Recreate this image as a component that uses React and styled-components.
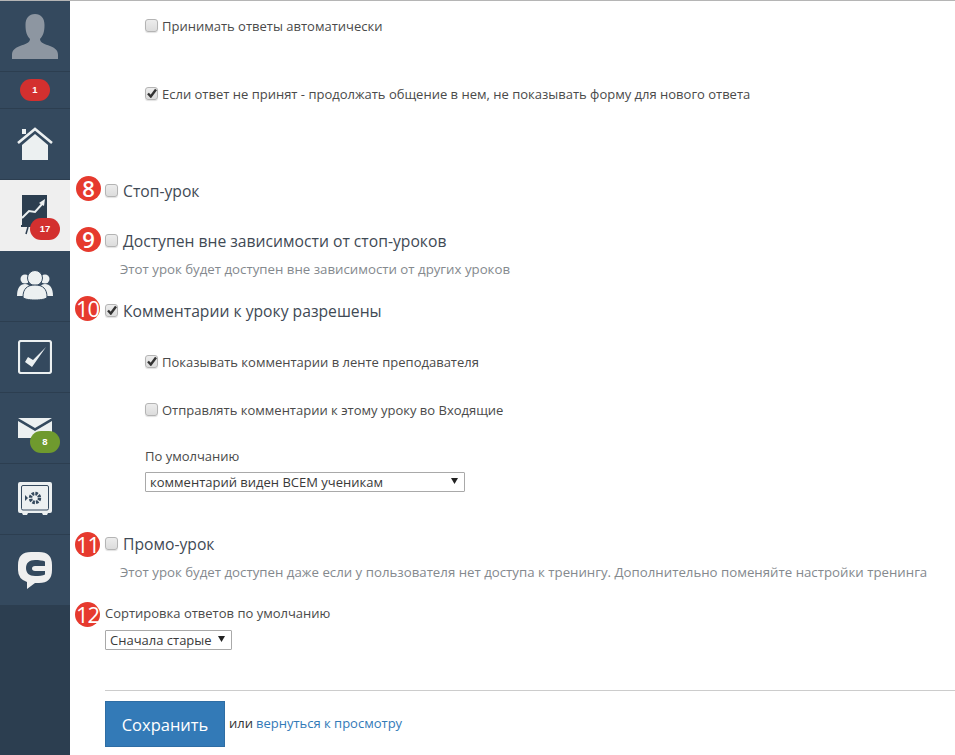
import React from 'react';
import styled, { createGlobalStyle } from 'styled-components';

const Global = createGlobalStyle`
  html, body {
    margin: 0;
    padding: 0;
    height: 755px;
    overflow: hidden;
    background: #fff;
  }
  body {
    font-family: "Open Sans", "Liberation Sans", sans-serif;
    font-size: 13px;
    color: #333;
  }
`;

const Page = styled.div`
  display: flex;
  height: 755px;
  border-top: 1px solid #b5b5b5;
  box-sizing: border-box;
`;

const Sidebar = styled.nav`
  width: 70px;
  flex: none;
  background: #2c3e50;
  display: flex;
  flex-direction: column;
`;

const NavItem = styled.div`
  position: relative;
  height: ${(p) => p.$h || 70}px;
  flex: none;
  display: flex;
  align-items: center;
  justify-content: center;
  background: ${(p) => (p.$active ? '#efefef' : '#34495e')};
  border-bottom: 1px solid ${(p) => (p.$active ? '#efefef' : '#2c3e50')};
`;

const Badge = styled.span`
  position: ${(p) => (p.$over ? 'absolute' : 'static')};
  left: 30px;
  top: 38px;
  width: 30px;
  height: 22px;
  border-radius: 11px;
  background: ${(p) => (p.$green ? '#6f9a2e' : '#d3302f')};
  color: #fff;
  font: bold 9.5px/22px "Liberation Sans", sans-serif;
  text-align: center;
`;

const Main = styled.main`
  flex: 1;
  min-width: 0;
  padding-left: 35px;
  display: flex;
  flex-direction: column;
`;

const Row = styled.label`
  position: relative;
  display: flex;
  align-items: center;
  height: 20px;
  margin-top: ${(p) => p.$top}px;
  margin-left: ${(p) => (p.$sub ? 40 : 0)}px;
  gap: ${(p) => (p.$big ? 5 : 4)}px;
  font-size: ${(p) => (p.$big ? 15.7 : 13)}px;
  color: ${(p) => (p.$big ? '#3f4a55' : '#4a4a4a')};
  white-space: nowrap;
`;

const Box = styled.span`
  box-sizing: border-box;
  width: 13px;
  height: 13px;
  flex: none;
  border: 1px solid #b4b4b4;
  border-radius: 3px;
  background: linear-gradient(#ececec, #dcdcdc);
  box-shadow: 0 1px 1px rgba(0, 0, 0, 0.12);
  display: flex;
  align-items: center;
  justify-content: center;
  position: relative;
  top: -1px;
`;

const Marker = styled.span`
  position: absolute;
  left: ${(p) => p.$x || -29}px;
  top: ${(p) => p.$y}px;
  width: 25px;
  height: 25px;
  border-radius: 50%;
  background: #e63a2e;
  color: #fff;
  font-family: "Open Sans", sans-serif;
  font-weight: ${(p) => (p.$wide ? 400 : 600)};
  font-size: 22px;
  line-height: 25px;
  letter-spacing: ${(p) => (p.$wide ? -1 : 0)}px;
  text-align: center;
`;

const Hint = styled.div`
  margin-top: ${(p) => p.$top}px;
  margin-left: 15px;
  height: 18px;
  line-height: 18px;
  font-size: 13.25px;
  color: #84898e;
  white-space: nowrap;
`;

const Caption = styled.div`
  position: relative;
  margin-top: ${(p) => p.$top}px;
  margin-left: ${(p) => (p.$sub ? 40 : 0)}px;
  height: 18px;
  line-height: 18px;
  font-size: 13px;
  color: #4a4a4a;
`;

const Select = styled.div`
  box-sizing: border-box;
  margin-top: ${(p) => p.$top}px;
  margin-left: ${(p) => (p.$sub ? 40 : 0)}px;
  width: ${(p) => p.$w}px;
  height: 20px;
  border: 1px solid #a9a9a9;
  border-radius: 1px;
  padding: 0 6px 0 4px;
  display: flex;
  align-items: center;
  justify-content: space-between;
  font-size: 13px;
  color: #3a3a3a;
  white-space: nowrap;
`;

const Arrow = styled.svg`
  width: 7px;
  height: 6px;
  fill: #222;
  flex: none;
  margin-bottom: 2px;
`;

const Divider = styled.hr`
  margin: 40px 0 0;
  border: 0;
  border-top: 1px solid #ccc;
`;

const Actions = styled.div`
  display: flex;
  align-items: center;
  margin-top: 10px;
  gap: 3px;
  font-size: 13px;
  color: #333;
`;

const SaveButton = styled.button`
  width: 120px;
  height: 46px;
  margin-right: 1px;
  border: 1px solid #2e6da4;
  background: #337ab7;
  color: #fff;
  font: 16.5px "Open Sans", sans-serif;
  padding: 0;
`;

const ActionText = styled.span`
  padding-bottom: 3px;
`;

const BackLink = styled.a`
  color: #337ab7;
  text-decoration: none;
  padding-bottom: 3px;
`;

const Check = () => (
  <svg width="10" height="10" viewBox="0 0 10 10">
    <path d="M1 5.5 L3.8 8.5 L9 1.5" fill="none" stroke="#333" strokeWidth="2.4" />
  </svg>
);

const Checkbox = ({ checked }) => <Box>{checked && <Check />}</Box>;

const DropArrow = () => (
  <Arrow viewBox="0 0 7 6">
    <path d="M0 0h7L3.5 6z" />
  </Arrow>
);

const AvatarIcon = () => (
  <svg width="46" height="45" viewBox="0 0 46 45" fill="#8d96a1">
    <path d="M0 45 V41 C0 36 3 34 8 32 C13 30 18 29 18 25 C15 22 13.5 18 13.5 11 C13.5 4 17 0 23 0 C29 0 32.5 4 32.5 11 C32.5 18 31 22 28 25 C28 29 33 30 38 32 C43 34 46 36 46 41 V45 Z" />
  </svg>
);

const HomeIcon = () => (
  <svg width="36" height="34" viewBox="0 0 36 34">
    <path d="M5 18 L18 7 L31 18 V33 H5 Z" fill="#ecf0f1" />
    <path d="M1 16 L18 2 L35 16" fill="none" stroke="#ecf0f1" strokeWidth="2.6" />
    <rect x="5" y="2" width="4" height="5" fill="#ecf0f1" />
  </svg>
);

const ChartIcon = () => (
  <svg width="28" height="40" viewBox="0 0 28 40">
    <rect x="1" y="0" width="25" height="30" fill="#2c3e50" />
    <path d="M1 23 L8 16 L14 17 L22 8" fill="none" stroke="#ecf0f1" strokeWidth="2" />
    <path d="M18 8 L24 4 L23 11 Z" fill="#ecf0f1" />
    <rect x="0" y="30" width="27" height="2" fill="#2c3e50" />
    <path d="M5 39 L7 32" stroke="#2c3e50" strokeWidth="1.5" />
  </svg>
);

const UsersIcon = () => (
  <svg width="36" height="32" viewBox="0 0 36 32" fill="#ecf0f1">
    <circle cx="8" cy="9" r="4.5" />
    <circle cx="28" cy="9" r="4.5" />
    <path d="M0 26 C0 18 3 14 8 14 C13 14 14 18 14 26 Z" />
    <path d="M22 26 C22 18 23 14 28 14 C33 14 36 18 36 26 Z" />
    <circle cx="18" cy="8" r="7.5" stroke="#34495e" strokeWidth="1" />
    <path d="M6 27 C6 19 10 15 18 15 C26 15 30 19 30 27 C30 31 6 31 6 27 Z" stroke="#34495e" strokeWidth="1" />
  </svg>
);

const TasksIcon = () => (
  <svg width="34" height="34" viewBox="0 0 34 34">
    <rect x="1" y="1" width="32" height="32" rx="2" fill="none" stroke="#ecf0f1" strokeWidth="2.2" />
    <path d="M7 22 L10 17 L15 20 L28 7 L14 27 Z" fill="#ecf0f1" />
  </svg>
);

const MailIcon = () => (
  <svg width="34" height="20" viewBox="0 0 34 20" fill="#ecf0f1">
    <path d="M0 0 H34 L17 10 Z" />
    <path d="M0 3 L17 13 L34 3 V20 H0 Z" />
  </svg>
);

const SafeIcon = () => (
  <svg width="34" height="34" viewBox="0 0 34 34">
    <path d="M2 0 H32 Q34 0 34 2 V29 Q34 31 32 31 H30 L29 33 H25 L24 31 H10 L9 33 H5 L4 31 H2 Q0 31 0 29 V2 Q0 0 2 0 Z" fill="#ecf0f1" />
    <rect x="3.5" y="3.5" width="27" height="24.5" rx="1.5" fill="none" stroke="#34495e" />
    <circle cx="17" cy="16" r="4.5" fill="none" stroke="#34495e" strokeWidth="3.4" strokeDasharray="2.4 1.1" />
    <path d="M7 13 L10 16 L7 19 Z" fill="#34495e" />
  </svg>
);

const ChatIcon = () => (
  <svg width="34" height="37" viewBox="0 0 34 37">
    <path d="M13 0 H21 Q34 0 34 13 V18 Q34 31 21 31 H17 L9 37 V30 Q0 27 0 18 V13 Q0 0 13 0 Z" fill="#efefef" />
    <path d="M27 9.5 C25 8.5 21 8 17 8 C11 8 8 11 8 16 C8 21 11 24 17 24 C21 24 25 23.5 27 22.5 V19 H17 C15 19 14 17.8 14 16.5 C14 15.2 15 14 17 14 H27 Z" fill="#34495e" />
  </svg>
);

export default function App() {
  return (
    <>
      <Global />
      <Page>
        <Sidebar>
          <NavItem>
            <AvatarIcon />
          </NavItem>
          <NavItem $h={36}>
            <Badge>1</Badge>
          </NavItem>
          <NavItem>
            <HomeIcon />
          </NavItem>
          <NavItem $active>
            <ChartIcon />
            <Badge $over>17</Badge>
          </NavItem>
          <NavItem>
            <UsersIcon />
          </NavItem>
          <NavItem>
            <TasksIcon />
          </NavItem>
          <NavItem>
            <MailIcon />
            <Badge $over $green>8</Badge>
          </NavItem>
          <NavItem>
            <SafeIcon />
          </NavItem>
          <NavItem>
            <ChatIcon />
          </NavItem>
        </Sidebar>
        <Main>
          <Row $sub $top={15}>
            <Checkbox />
            Принимать ответы автоматически
          </Row>
          <Row $sub $top={48}>
            <Checkbox checked />
            Если ответ не принят - продолжать общение в нем, не показывать форму для нового ответа
          </Row>
          <Row $big $top={77}>
            <Marker $y={-5}>8</Marker>
            <Checkbox />
            Стоп-урок
          </Row>
          <Row $big $top={30}>
            <Marker $y={-4}>9</Marker>
            <Checkbox />
            Доступен вне зависимости от стоп-уроков
          </Row>
          <Hint $top={9}>Этот урок будет доступен вне зависимости от других уроков</Hint>
          <Row $big $top={23}>
            <Marker $wide $x={-30} $y={-5}>10</Marker>
            <Checkbox checked />
            Комментарии к уроку разрешены
          </Row>
          <Row $sub $top={31}>
            <Checkbox checked />
            Показывать комментарии в ленте преподавателя
          </Row>
          <Row $sub $top={28}>
            <Checkbox />
            Отправлять комментарии к этому уроку во Входящие
          </Row>
          <Caption $sub $top={27}>По умолчанию</Caption>
          <Select $sub $w={320} $top={7}>
            комментарий виден ВСЕМ ученикам
            <DropArrow />
          </Select>
          <Row $big $top={42}>
            <Marker $wide $x={-30} $y={-2}>11</Marker>
            <Checkbox />
            Промо-урок
          </Row>
          <Hint $top={9}>Этот урок будет доступен даже если у пользователя нет доступа к тренингу. Дополнительно поменяйте настройки тренинга</Hint>
          <Caption $top={23}>
            <Marker $wide $x={-30} $y={-2}>12</Marker>
            Сортировка ответов по умолчанию
          </Caption>
          <Select $w={127} $top={8}>
            Сначала старые
            <DropArrow />
          </Select>
          <Divider />
          <Actions>
            <SaveButton>Сохранить</SaveButton>
            <ActionText>или</ActionText>
            <BackLink href="#">вернуться к просмотру</BackLink>
          </Actions>
        </Main>
      </Page>
    </>
  );
}
